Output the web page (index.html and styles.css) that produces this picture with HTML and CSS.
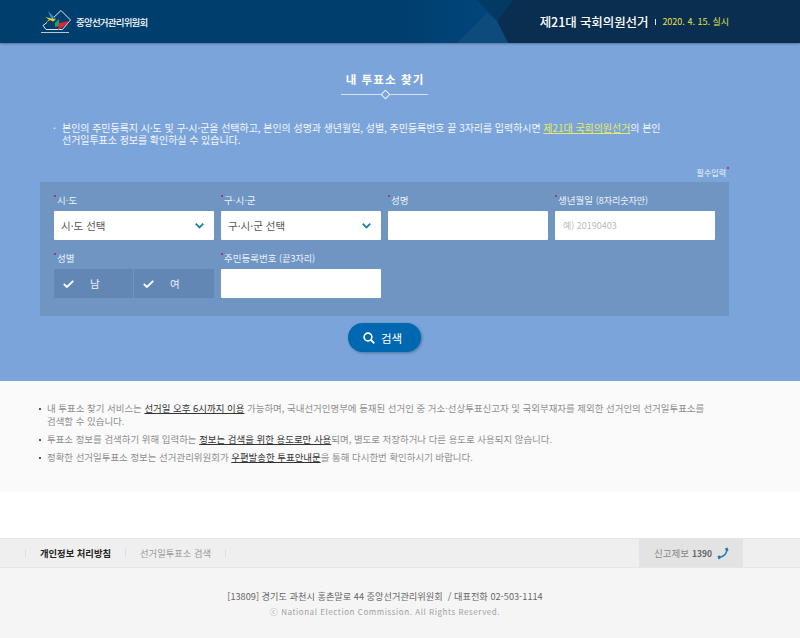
FILE: index.html
```html
<!DOCTYPE html>
<html lang="ko">
<head>
  <meta charset="UTF-8" />
  <meta name="viewport" content="width=device-width, initial-scale=1.0"/>
  <title>내 투표소 찾기 | 제21대 국회의원선거</title>
  <link rel="stylesheet" href="styles.css">
</head>
<body>
  <header class="top-bar">
    <svg class="top-pattern" width="800" height="43" viewBox="0 0 800 43">
      <polygon points="513,0 800,0 800,43 508,43 497,21" fill="#0a2e4f"/>
      <polygon points="477,0 513,0 497,21" fill="#033a64"/>
      <polygon points="457,43 508,43 497,21 487,13" fill="#0c4b7b"/>
    </svg>
    <div class="logo">
      <svg class="logo-mark" width="30" height="23" viewBox="0 0 30 23">
        <path d="M10 10 L20 0.5 L29.5 10 L21.5 19.5 L5 19.5 L2 15.5 L6 12.5" fill="none" stroke="#dfe8f0" stroke-width="1"/>
        <path d="M4 7 L15 9.5 L12 11.5 L9 10 L4.5 13 L8 9.5 Z" fill="#f2d21c"/>
        <path d="M7 1 L15 9 L10 8 Z" fill="#2a8fd6"/>
        <path d="M14 13 L18 9 L18 16 L14 17 Z" fill="#27a35a"/>
        <path d="M17 20 L18 13 L29 11 L22 17 Z" fill="#d8283a"/>
        <path d="M0 22.5 H28" stroke="#b9c7d6" stroke-width="1"/>
      </svg>
      <span class="logo-text">중앙선거관리위원회</span>
    </div>
    <div class="election">
      <strong class="election-name">제21대 국회의원선거</strong>
      <span class="election-sep"></span>
      <span class="election-date">2020. 4. 15. 실시</span>
    </div>
  </header>

  <main class="search-area">
    <h1 class="page-title">내 투표소 찾기</h1>
    <div class="title-rule"><span class="title-diamond"></span></div>

    <p class="intro">본인의 주민등록지 시·도 및 구·시·군을 선택하고, 본인의 성명과 생년월일, 성별, 주민등록번호 끝 3자리를 입력하시면 <a href="#">제21대 국회의원선거</a>의 본인 선거일투표소 정보를 확인하실 수 있습니다.</p>

    <div class="required-note">필수입력<i class="star"></i></div>

    <form class="search-form">
      <div class="field">
        <label class="field-label"><i class="star"></i>시·도</label>
        <div class="select-box">시·도 선택
          <svg class="chevron" width="9" height="6" viewBox="0 0 9 6"><path d="M0.7 0.7 L4.5 4.5 L8.3 0.7" fill="none" stroke="#1f7fa8" stroke-width="1.8"/></svg>
        </div>
      </div>
      <div class="field">
        <label class="field-label"><i class="star"></i>구·시·군</label>
        <div class="select-box">구·시·군 선택
          <svg class="chevron" width="9" height="6" viewBox="0 0 9 6"><path d="M0.7 0.7 L4.5 4.5 L8.3 0.7" fill="none" stroke="#1f7fa8" stroke-width="1.8"/></svg>
        </div>
      </div>
      <div class="field">
        <label class="field-label" for="name"><i class="star"></i>성명</label>
        <input id="name" class="text-input" type="text">
      </div>
      <div class="field">
        <label class="field-label" for="birth"><i class="star"></i>생년월일 <small>(8자리숫자만)</small></label>
        <input id="birth" class="text-input" type="text" placeholder="예) 20190403">
      </div>
      <div class="field">
        <label class="field-label"><i class="star"></i>성별</label>
        <div class="gender">
          <div class="gender-item">
            <svg width="11" height="8" viewBox="0 0 11 8"><path d="M0.8 4 L4 7 L10.2 0.8" fill="none" stroke="#fff" stroke-width="1.8"/></svg>
            <span>남</span>
          </div>
          <div class="gender-item">
            <svg width="11" height="8" viewBox="0 0 11 8"><path d="M0.8 4 L4 7 L10.2 0.8" fill="none" stroke="#fff" stroke-width="1.8"/></svg>
            <span>여</span>
          </div>
        </div>
      </div>
      <div class="field">
        <label class="field-label" for="rrn"><i class="star"></i>주민등록번호 <small>(끝3자리)</small></label>
        <input id="rrn" class="text-input" type="text">
      </div>
    </form>

    <button class="search-btn" type="button">
      <svg width="12" height="12" viewBox="0 0 12 12"><circle cx="5" cy="5" r="3.9" fill="none" stroke="#fff" stroke-width="1.6"/><path d="M8 8 L11.3 11.3" stroke="#fff" stroke-width="1.8"/></svg>
      검색
    </button>
  </main>

  <section class="notes">
    <ul>
      <li>내 투표소 찾기 서비스는 <u>선거일 오후 6시까지 이용</u> 가능하며, 국내선거인명부에 등재된 선거인 중 거소·선상투표신고자 및 국외부재자를 제외한 선거인의 선거일투표소를 검색할 수 있습니다.</li>
      <li>투표소 정보를 검색하기 위해 입력하는 <u>정보는 검색을 위한 용도로만 사용</u>되며, 별도로 저장하거나 다른 용도로 사용되지 않습니다.</li>
      <li>정확한 선거일투표소 정보는 선거관리위원회가 <u>우편발송한 투표안내문</u>을 통해 다시한번 확인하시기 바랍니다.</li>
    </ul>
  </section>

  <footer class="footer">
    <nav class="footer-nav">
      <div class="footer-links">
        <a class="active" href="#">개인정보 처리방침</a>
        <a href="#">선거일투표소 검색</a>
      </div>
      <div class="report">신고제보 <b>1390</b>
        <svg width="12" height="13" viewBox="0 0 12 13">
          <path d="M9.5 2 C10.5 6 7 10 2 10.5" fill="none" stroke="#1f7ab8" stroke-width="1.6"/>
          <path d="M8 1.5 L10.5 0.5 L11.5 3.5 L9.5 4.5 Z M0.5 9 L3 8.5 L4 11 L1.5 12.5 Z" fill="#1f7ab8"/>
        </svg>
      </div>
    </nav>
    <div class="footer-info">
      <p>[13809] 경기도 과천시 홍촌말로 44 중앙선거관리위원회 &nbsp;/ 대표전화 02-503-1114</p>
      <p class="copyright">ⓒ National Election Commission. All Rights Reserved.</p>
    </div>
  </footer>
</body>
</html>
```

FILE: styles.css
```css
* {
  box-sizing: border-box;
}

body {
  margin: 0;
  background-color: white;
  font-family: "Noto Sans CJK KR", "Noto Sans", sans-serif;
  font-size: 10px;
  color: #777;
}

.top-bar {
  display: flex;
  justify-content: space-between;
  align-items: center;
  height: 43px;
  padding: 0 71px 0 41px;
  background: linear-gradient(90deg, #003e6e 0%, #003e6e 50%, #00467a 60%);
  box-shadow: 0 1px 2px rgba(0, 0, 0, 0.3);
  position: relative;
}

.top-pattern {
  position: absolute;
  left: 0;
  top: 0;
}

.logo,
.election {
  position: relative;
  display: flex;
  align-items: center;
}

.logo {
  gap: 5px;
}

.logo-text {
  color: #fff;
  font-size: 9.5px;
  font-weight: 500;
  letter-spacing: -0.8px;
}

.election-name {
  color: #fff;
  font-size: 12.5px;
  font-weight: 500;
  letter-spacing: -0.1px;
}

.election-sep {
  width: 1px;
  height: 6px;
  margin: 0 6px 0 7px;
  background-color: #dfe8f0;
}

.election-date {
  color: #e6e04e;
  font-size: 9px;
}

.search-area {
  height: 338px;
  padding-top: 28px;
  background-color: #7ba5da;
}

.page-title {
  width: 770px;
  margin: 0;
  height: 17px;
  color: #fff;
  font-size: 11.5px;
  font-weight: 700;
  line-height: 17px;
  text-align: center;
  letter-spacing: 1.1px;
}

.title-rule {
  position: relative;
  width: 87px;
  height: 1px;
  margin: 6px 0 0 341px;
  background-color: #d6e2f2;
}

.title-diamond {
  position: absolute;
  left: 41px;
  top: -3px;
  width: 7px;
  height: 7px;
  background-color: #7ba5da;
  border: 1px solid #eef3fa;
  transform: rotate(45deg);
}

.intro {
  position: relative;
  width: 610px;
  margin: 27px 0 0 62px;
  color: #f3f6fb;
  font-size: 10px;
  line-height: 12px;
  letter-spacing: -0.05px;
}

.intro::before {
  content: "·";
  position: absolute;
  left: -9px;
}

.intro a {
  color: #e8ec5c;
}

.required-note {
  margin: 21px 71px 0 0;
  height: 15px;
  color: #f3f6fb;
  font-size: 8px;
  line-height: 12px;
  text-align: right;
}

.star {
  display: inline-block;
  width: 2px;
  height: 2px;
  margin-right: 1px;
  border-radius: 50%;
  background-color: #d0105a;
  vertical-align: 7px;
}

.required-note .star {
  margin: 0 0 0 1px;
}

.search-form {
  display: grid;
  grid-template-columns: repeat(4, 160px);
  column-gap: 7px;
  row-gap: 10px;
  align-content: start;
  width: 689px;
  height: 134px;
  margin-left: 40px;
  padding: 10px 14px 0;
  background-color: #6f95c3;
}

.field-label {
  display: block;
  height: 19px;
  color: #eef3fa;
  font-size: 9.5px;
  line-height: 17px;
}

.field-label small {
  font-size: 9px;
}

.select-box {
  display: flex;
  justify-content: space-between;
  align-items: center;
  height: 29px;
  padding: 0 10px 0 7px;
  border-radius: 1px;
  background-color: #fff;
  color: #555;
  font-size: 10.5px;
}

.text-input {
  display: block;
  width: 100%;
  height: 29px;
  padding: 0 8px;
  border: none;
  border-radius: 1px;
  background-color: #fff;
  font-family: "Noto Sans CJK KR", "Noto Sans", sans-serif;
  font-size: 9px;
}

.text-input::placeholder {
  color: #bbb;
}

.gender {
  display: flex;
  height: 29px;
}

.gender-item {
  display: flex;
  align-items: center;
  gap: 16px;
  width: 80px;
  padding-left: 9px;
  background-color: #6387b5;
  color: #eef3fa;
  font-size: 10.5px;
}

.gender-item + .gender-item {
  box-shadow: -1px 0 0 #6f95c3;
}

.search-btn {
  display: flex;
  justify-content: center;
  align-items: center;
  gap: 6px;
  width: 73px;
  height: 29px;
  margin: 7px 0 0 348px;
  padding: 0 4px 0 0;
  border: none;
  border-radius: 15px;
  background-color: #0068b0;
  box-shadow: 1px 1px 3px rgba(0, 40, 80, 0.4);
  color: #fff;
  font-family: "Noto Sans CJK KR", "Noto Sans", sans-serif;
  font-size: 11.5px;
}

.notes {
  height: 111px;
  padding-top: 21px;
  background-color: #fafafa;
  font-size: 9.45px;
  line-height: 13px;
  color: #8e8e8e;
  word-break: keep-all;
}

.notes ul {
  width: 670px;
  margin: 0 0 0 47px;
  padding: 0;
  list-style: none;
}

.notes li {
  position: relative;
  margin-bottom: 5px;
}

.notes li::before {
  content: "";
  position: absolute;
  left: -8px;
  top: 6px;
  width: 2px;
  height: 2px;
  background-color: #555;
}

.notes u {
  color: #333;
}

.footer {
  margin-top: 46px;
  background-color: #f5f5f5;
}

.footer-nav {
  display: flex;
  justify-content: space-between;
  height: 30px;
  padding: 0 57px 0 25px;
  border-top: 1px solid #e6e6e6;
  border-bottom: 1px solid #e6e6e6;
  background-color: #efefef;
}

.footer-links {
  display: flex;
  align-items: center;
  border-left: 1px solid #ddd;
  height: 8px;
  align-self: center;
}

.footer-links a {
  padding: 0 14px;
  border-right: 1px solid #ddd;
  color: #999;
  font-size: 9.3px;
  line-height: 8px;
  text-decoration: none;
}

.footer-links .active {
  color: #222;
  font-weight: 700;
}

.report {
  display: flex;
  align-items: center;
  gap: 3px;
  width: 104px;
  padding-left: 15px;
  background-color: #e3e3e3;
  color: #888;
  font-size: 9.5px;
}

.report b {
  color: #666;
  font-size: 8.5px;
  margin-right: 2px;
}

.footer-info {
  width: 770px;
  height: 70px;
  padding-top: 21px;
  text-align: center;
  font-size: 9.2px;
  line-height: 15px;
  color: #666;
}

.footer-info p {
  margin: 0;
}

.copyright {
  color: #a0a0a0;
  font-size: 8px;
  letter-spacing: 0.55px;
}
```
